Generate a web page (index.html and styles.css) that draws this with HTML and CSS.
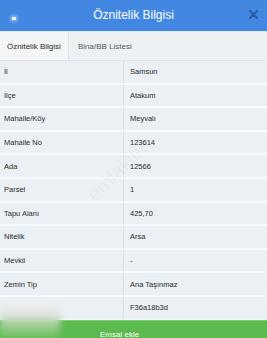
FILE: index.html
```html
<!DOCTYPE html>
<html lang="tr">
<head>
<meta charset="utf-8">
<title>Öznitelik Bilgisi</title>
<link rel="stylesheet" href="styles.css">
</head>
<body>
<div class="modal">
  <header class="head">
    <span class="dot"></span>
    <h1 class="title">Öznitelik Bilgisi</h1>
    <span class="close">
      <svg width="9" height="9" viewBox="0 0 9 9"><path d="M1 1L8 8M8 1L1 8" stroke="#2c5595" stroke-width="2.2" stroke-linecap="round"/></svg>
    </span>
  </header>
  <nav class="tabs">
    <span class="tab active">Öznitelik Bilgisi</span>
    <span class="tab">Bina/BB Listesi</span>
  </nav>
  <div class="table">
    <div class="row"><span class="k">İl</span><span class="v">Samsun</span></div>
    <div class="row"><span class="k">İlçe</span><span class="v">Atakum</span></div>
    <div class="row"><span class="k">Mahalle/Köy</span><span class="v">Meyvalı</span></div>
    <div class="row"><span class="k">Mahalle No</span><span class="v">123614</span></div>
    <div class="row"><span class="k">Ada</span><span class="v">12566</span></div>
    <div class="row"><span class="k">Parsel</span><span class="v">1</span></div>
    <div class="row"><span class="k">Tapu Alanı</span><span class="v">425,70</span></div>
    <div class="row"><span class="k">Nitelik</span><span class="v">Arsa</span></div>
    <div class="row"><span class="k">Mevkii</span><span class="v">-</span></div>
    <div class="row"><span class="k">Zemin Tip</span><span class="v">Ana Taşınmaz</span></div>
    <div class="row"><span class="k"></span><span class="v">F36a18b3d</span></div>
  </div>
  <div class="btn">Emsal ekle</div>
  <div class="blur"></div>
  <div class="mark">emlakjet</div>
</div>
</body>
</html>
```

FILE: styles.css
```css
* { box-sizing: border-box; margin: 0; padding: 0; }
html, body { width: 267px; height: 338px; overflow: hidden; background: #eaf0f4; }
body { font-family: "Liberation Sans", Arial, sans-serif; }
.modal { position: relative; width: 267px; height: 338px; overflow: hidden; display: flex; flex-direction: column; }
.head {
  height: 32px; flex: none; background: #4287e2;
  display: flex; align-items: center; justify-content: center; position: relative;
  border-bottom: 1px solid #dfe8f2;
}
.title { font-weight: normal; color: #fff; font-size: 12px; letter-spacing: 0; margin-top: -2px; }
.dot { position: absolute; left: 12px; top: 17px; width: 4px; height: 3px; background: #f2f6fc; border-radius: 1px; box-shadow: 0 0 3px 2px rgba(255,255,255,0.35); }
.close { position: absolute; right: 9px; top: 10px; display: flex; opacity: 0.85; }
.tabs {
  height: 29px; flex: none; display: flex; background: #eef1f4;
  border-bottom: 1px solid #dde3e8;
}
.tab { font-size: 8px; color: #5a5a5a; display: flex; align-items: center; padding: 0 8px 0 9px; }
.tab.active { color: #2e2e2e; background: #f3f5f7; border-right: 1px solid #dde2e7; padding: 0 6px 0 7px; width: 69px; }
.table { display: flex; flex-direction: column; }
.row {
  height: 23.6px; display: grid; grid-template-columns: 124px 1fr;
  background: #eaf0f4; border-bottom: 2px solid #f7fafc; font-size: 7.5px; color: #2b2b2b;
}
.k { display: flex; align-items: center; padding-left: 4px; border-right: 1px solid #d9dee3; }
.v { display: flex; align-items: center; padding-left: 6px; }
.btn {
  flex: none; height: 20px; margin-top: -1px; background: #5bbb4f; color: #fff;
  font-size: 8px; line-height: 9px; padding: 9px 0 0 100px; border-top: 1px solid #7bcc70;
}
.blur {
  position: absolute; left: 0; top: 300px; width: 60px; height: 38px;
  background: linear-gradient(180deg, #eef0f0 0%, #e2e4e2 40%, #a6cf9a 62%, #6bbf5e 100%);
  filter: blur(3px);
}
.mark {
  position: absolute; left: 80px; top: 160px; font-size: 20px; color: rgba(0,0,0,0.035);
  transform: rotate(-45deg); pointer-events: none;
}
```
